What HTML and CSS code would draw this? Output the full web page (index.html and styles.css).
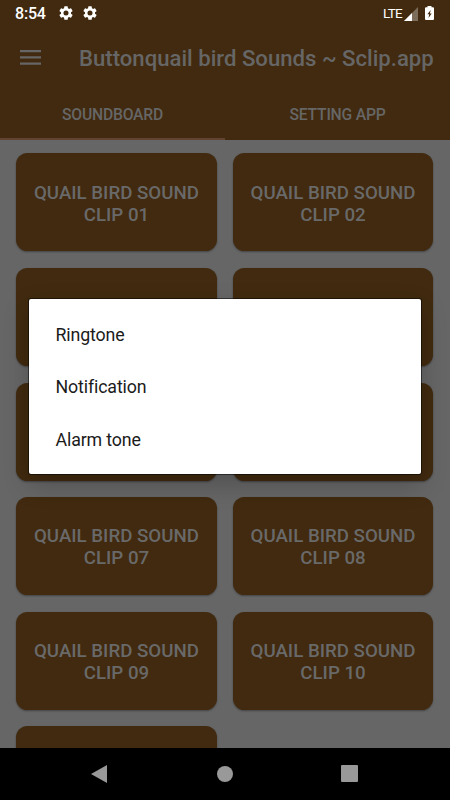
FILE: index.html
```html
<!DOCTYPE html>
<html lang="en">
<head>
<meta charset="utf-8">
<title>Buttonquail bird Sounds ~ Sclip.app</title>
<link rel="stylesheet" href="styles.css">
</head>
<body>
<div class="screen">
  <header class="header">
    <div class="status">
      <span class="time">8:54</span>
      <svg class="gear" viewBox="2 2 20 20"><path d="M19.14 12.94a7 7 0 0 0 0-1.88l2.03-1.58a.5.5 0 0 0 .12-.61l-1.92-3.32a.5.5 0 0 0-.59-.22l-2.39.96a7 7 0 0 0-1.62-.94l-.36-2.54a.5.5 0 0 0-.48-.41h-3.84a.5.5 0 0 0-.47.41l-.36 2.54a7.400 7.400 0 0 0-1.620.94l-2.390-.96a.5.5 0 0 0-.59.22L2.740 8.870a.5.5 0 0 0 .12.61l2.030 1.580a7 7 0 0 0 0 1.880l-2.030 1.580a.5.5 0 0 0-.12.61l1.920 3.320c.12.22.37.29.59.22l2.390-.96c.5.38 1.030.7 1.620.94l.36 2.540c.05.24.24.41.48.41h3.840c.24 0 .44-.17.47-.41l.36-2.540a7.400 7.400 0 0 0 1.620-.94l2.390.96c.22.08.47 0 .59-.22l1.920-3.320a.5.5 0 0 0-.12-.61zM12 15.600a3.600 3.600 0 1 1 0-7.200 3.600 3.600 0 0 1 0 7.200z"/></svg>
      <svg class="gear" viewBox="2 2 20 20"><path d="M19.14 12.94a7 7 0 0 0 0-1.88l2.03-1.58a.5.5 0 0 0 .12-.61l-1.92-3.32a.5.5 0 0 0-.59-.22l-2.39.96a7 7 0 0 0-1.62-.94l-.36-2.54a.5.5 0 0 0-.48-.41h-3.84a.5.5 0 0 0-.47.41l-.36 2.54a7.400 7.400 0 0 0-1.620.94l-2.390-.96a.5.5 0 0 0-.59.22L2.740 8.870a.5.5 0 0 0 .12.61l2.030 1.580a7 7 0 0 0 0 1.880l-2.030 1.580a.5.5 0 0 0-.12.61l1.920 3.320c.12.22.37.29.59.22l2.390-.96c.5.38 1.030.7 1.620.94l.36 2.540c.05.24.24.41.48.41h3.840c.24 0 .44-.17.47-.41l.36-2.540a7.400 7.400 0 0 0 1.620-.94l2.390.96c.22.08.47 0 .59-.22l1.920-3.320a.5.5 0 0 0-.12-.61zM12 15.600a3.600 3.600 0 1 1 0-7.200 3.600 3.600 0 0 1 0 7.200z"/></svg>
      <span class="lte">LTE</span>
      <svg class="signal" viewBox="0 0 14 14"><path class="dim" d="M14 0v14H0z"/><path d="M8 6v8H0z"/></svg>
      <svg class="battery" viewBox="0 0 9 14"><path d="M2.500 1.300V0h4v1.300H8q1 0 1 1V13q0 1-1 1H1q-1 0-1-1V2.300q0-1 1-1z"/><path class="bolt" d="M5.700 4 2.400 8.300h1.800L3.500 12l3.200-4.600H4.900z"/></svg>
    </div>
    <div class="toolbar">
      <svg class="menu" viewBox="0 0 21 15"><path d="M0 0h21v2.300H0zM0 6.300h21v2.300H0zM0 12.400h21v2.300H0z"/></svg>
      <h1 class="title">Buttonquail bird Sounds ~ Sclip.app</h1>
    </div>
    <nav class="tabs">
      <div class="tab active">SOUNDBOARD</div>
      <div class="tab">SETTING APP</div>
    </nav>
  </header>
  <main class="board">
    <div class="card">QUAIL BIRD SOUND<br>CLIP 01</div>
    <div class="card">QUAIL BIRD SOUND<br>CLIP 02</div>
    <div class="card"></div>
    <div class="card"></div>
    <div class="card"></div>
    <div class="card"></div>
    <div class="card">QUAIL BIRD SOUND<br>CLIP 07</div>
    <div class="card">QUAIL BIRD SOUND<br>CLIP 08</div>
    <div class="card">QUAIL BIRD SOUND<br>CLIP 09</div>
    <div class="card">QUAIL BIRD SOUND<br>CLIP 10</div>
    <div class="card"></div>
  </main>
  <footer class="navbar">
    <svg class="back" viewBox="0 0 16 18"><path d="M16 0v18L0 9z"/></svg>
    <span class="home"></span>
    <span class="recent"></span>
  </footer>
  <div class="dialog">
    <div class="option">Ringtone</div>
    <div class="option">Notification</div>
    <div class="option">Alarm tone</div>
  </div>
</div>
</body>
</html>
```

FILE: styles.css
```css
* { box-sizing: border-box; }
body { margin: 0; font-family: Roboto, sans-serif; }
svg { display: block; flex: none; }
.screen {
  position: relative;
  width: 450px;
  height: 800px;
  overflow: hidden;
  display: flex;
  flex-direction: column;
  background: #666;
}
.header {
  flex: none;
  height: 140px;
  display: flex;
  flex-direction: column;
  background: #412a0f;
  color: #666;
}
.status {
  height: 26px;
  display: flex;
  align-items: center;
  padding: 0 16px 0 15px;
  color: #fff;
  fill: #fff;
}
.time { width: 43.500px; padding-top: 2px; font-size: 16px; font-weight: 500; line-height: 26px; letter-spacing: -0.200px; }
.gear { width: 14px; height: 14px; margin-right: 10px; }
.lte { margin-left: auto; font-size: 13.500px; line-height: 26px; letter-spacing: -0.700px; }
.signal { width: 14px; height: 14px; margin: 1px 7px 0 2px; }
.dim { fill: #7d6d5b; }
.battery { width: 9px; height: 14px; }
.bolt { fill: #412a0f; }
.toolbar {
  height: 62px;
  display: flex;
  align-items: center;
  padding-left: 20px;
}
.menu { width: 21px; height: 15px; margin-right: 38px; fill: #666; }
.title { margin: 0; padding-top: 2px; font-size: 22.150px; font-weight: 500; line-height: 28px; white-space: nowrap; }
.tabs { flex: 1; display: flex; }
.tab {
  flex: 1;
  padding-top: 5px;
  text-align: center;
  font-size: 15.700px;
  font-weight: 500;
  line-height: 43px;
  letter-spacing: -0.200px;
  border-bottom: 2px solid transparent;
}
.active { border-bottom-color: #62432f; }
.board {
  flex: 1;
  min-height: 0;
  overflow: hidden;
  display: grid;
  grid-template-columns: 200.300px 200.300px;
  grid-auto-rows: 98px;
  gap: 16.600px 16.300px;
  padding: 13.400px 0 0 16.300px;
}
.card {
  display: flex;
  align-items: center;
  justify-content: center;
  text-align: center;
  padding-top: 2.500px;
  border-radius: 11.500px;
  background: #412a0f;
  box-shadow: 0 1px 2px rgba(0, 0, 0, 0.350);
  color: #696969;
  font-size: 18.700px;
  font-weight: 500;
  line-height: 22px;
}
.navbar {
  flex: none;
  height: 52px;
  display: flex;
  align-items: center;
  padding: 0 0 1px 91px;
  background: #000;
}
.back { width: 16px; height: 18px; fill: #999; }
.home { width: 16px; height: 16px; margin-left: 110px; border-radius: 50%; background: #999; }
.recent { width: 17px; height: 17px; margin-left: 107.500px; border-radius: 1px; background: #999; }
.dialog {
  position: absolute;
  left: 29px;
  top: 299px;
  width: 392px;
  height: 175px;
  padding: 10px 26.500px;
  border-radius: 2px;
  background: #fff;
  box-shadow: 0 0 0 1px rgba(0, 0, 0, 0.500), 0 10px 26px rgba(0, 0, 0, 0.220);
}
.option { height: 52.400px; line-height: 52.400px; font-size: 17.800px; letter-spacing: -0.130px; color: #1b1b1b; }
```
